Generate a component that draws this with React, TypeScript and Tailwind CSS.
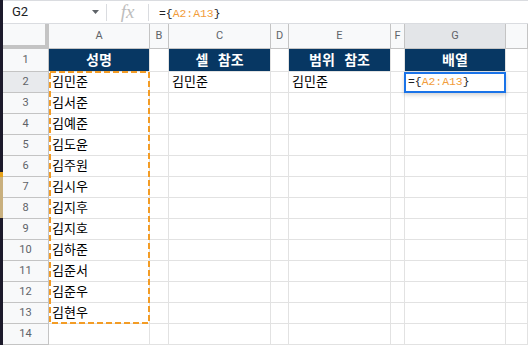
import React from "react";

const names = ["김민준","김서준","김예준","김도윤","김주원","김시우","김지후","김지호","김하준","김준서","김준우","김현우"];
const colLabels = ["A","B","C","D","E","F","G",""];
const headers: Record<number, string> = { 1: "성명", 3: "셀 참조", 5: "범위 참조", 7: "배열" };

function Formula() {
  return (
    <span className="font-['Liberation_Mono',monospace] text-[11.4px] text-[#202124] whitespace-pre">
      ={"{"}<span className="text-[#f29d3a]">A2:A13</span>{"}"}
    </span>
  );
}

export default function App() {
  const cells: React.ReactNode[] = [];
  cells.push(
    <div key="corner" className="bg-[#f8f9fa] border-r-[4px] border-b-[4px] border-[#c4c4c4]" />
  );
  colLabels.forEach((l, i) => {
    const sel = l === "G";
    cells.push(
      <div
        key={"h" + i}
        className={`flex items-center justify-center border-r border-b border-[#c4c4c4] text-[11px] text-[#5f6368] ${sel ? "bg-[#e3e5e8]" : "bg-[#f8f9fa]"}`}
      >
        {l}
      </div>
    );
  });
  for (let r = 1; r <= 14; r++) {
    cells.push(
      <div
        key={"r" + r}
        className={`flex items-center justify-center border-r border-b border-[#c4c4c4] text-[11px] text-[#5f6368] ${r === 2 ? "bg-[#e8eaed]" : "bg-[#f8f9fa]"}`}
      >
        {r}
      </div>
    );
    for (let c = 1; c <= 8; c++) {
      let content: React.ReactNode = null;
      let navy = false;
      if (r === 1 && headers[c]) {
        navy = true;
        content = headers[c];
      } else if (r >= 2 && r <= 13 && c === 1) {
        content = names[r - 2];
      } else if (r === 2 && (c === 3 || c === 5)) {
        content = "김민준";
      }
      cells.push(
        <div
          key={`c${r}-${c}`}
          className={
            navy
              ? "flex items-center justify-center bg-[#073763] border-r border-b border-[#e2e2e2] text-white font-bold text-[14px] [word-spacing:6px]"
              : "flex items-center pl-[3px] border-r border-b border-[#e2e2e2] text-[13px] text-black whitespace-nowrap overflow-hidden"
          }
        >
          {content}
        </div>
      );
    }
  }

  return (
    <div className="w-[528px] h-[345px] overflow-hidden flex bg-white font-['Roboto','Noto_Sans_CJK_KR',sans-serif]">
      <div className="w-[3px] bg-[#1c1a2b] flex flex-col shrink-0">
        <div className="h-[172px]" />
        <div className="h-[5px] bg-[#e5a21c]" />
        <div className="h-[41px] bg-[#c9b07e]" />
      </div>
      <div className="flex-1 flex flex-col min-w-0">
        <div className="h-[24px] border-t border-b border-[#dadce0] flex items-center shrink-0">
          <div className="w-[103px] flex items-center pl-[9px] pr-[7px]">
            <span className="text-[13px] text-[#202124] flex-1">G2</span>
            <svg width="7" height="4" viewBox="0 0 7 4"><path d="M0 0 L7 0 L3.5 4 Z" fill="#5f6368" /></svg>
          </div>
          <div className="w-px h-[17px] bg-[#dadce0]" />
          <div className="w-[41px] flex items-center justify-center">
            <span className="font-['Liberation_Serif',serif] italic text-[19px] leading-none text-[#bdbdbd] -mt-[2px]">fx</span>
          </div>
          <div className="w-px h-[17px] bg-[#dadce0]" />
          <div className="pl-[10px]">
            <Formula />
          </div>
        </div>
        <div className="relative grid grid-cols-[46px_101px_19px_102px_18px_102px_14px_101px_1fr] grid-rows-[25px_23px_repeat(13,21px)]">
          {cells}
          <svg className="absolute left-[46px] top-[47px]" width="101" height="253" viewBox="0 0 101 253">
            <rect x="1" y="1" width="99" height="251" fill="none" stroke="#f39c25" strokeWidth="2" strokeDasharray="6 3" />
          </svg>
          <div className="absolute left-[401px] top-[48px] w-[102px] h-[21px] border-2 border-[#1a73e8] bg-white shadow-[0_2px_4px_rgba(0,0,0,0.18)] flex items-center pl-[2px]">
            <Formula />
          </div>
        </div>
      </div>
    </div>
  );
}
